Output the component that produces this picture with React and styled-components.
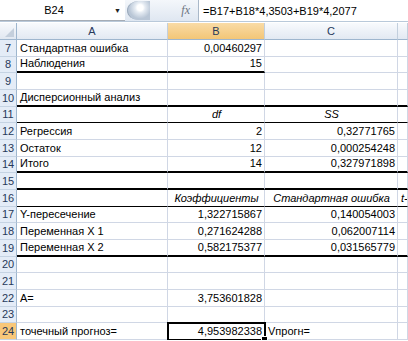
import styled, { createGlobalStyle } from "styled-components";

const GlobalStyle = createGlobalStyle`
  html, body {
    margin: 0;
    padding: 0;
    background: #ffffff;
  }
  body {
    font-family: "Liberation Sans", Arial, sans-serif;
    font-size: 11px;
    color: #000;
    overflow: hidden;
  }
`;

const columns = ["A", "B", "C", ""];

// rows of the regression output: [number, A, B, C, D, options]
const rows = [
  { n: 7, cells: ["Стандартная ошибка", "0,00460297", "", ""] },
  { n: 8, cells: ["Наблюдения", "15", "", ""], bottom: ["thick", "thick", null, null] },
  { n: 9, cells: ["", "", "", ""] },
  { n: 10, cells: ["Дисперсионный анализ", "", "", ""], bottom: ["thick", "thick", "thick", "thick"] },
  { n: 11, cells: ["", "df", "SS", ""], header: true, bottom: ["thin", "thin", "thin", "thin"] },
  { n: 12, cells: ["Регрессия", "2", "0,32771765", ""] },
  { n: 13, cells: ["Остаток", "12", "0,000254248", ""] },
  { n: 14, cells: ["Итого", "14", "0,327971898", ""], bottom: ["thick", "thick", "thick", "thick"] },
  { n: 15, cells: ["", "", "", ""], bottom: ["thick", "thick", "thick", "thick"] },
  { n: 16, cells: ["", "Коэффициенты", "Стандартная ошибка", "t-"], header: true, bottom: ["thin", "thin", "thin", "thin"] },
  { n: 17, cells: ["Y-пересечение", "1,322715867", "0,140054003", ""] },
  { n: 18, cells: ["Переменная X 1", "0,271624288", "0,062007114", ""] },
  { n: 19, cells: ["Переменная X 2", "0,582175377", "0,031565779", ""], bottom: ["thick", "thick", "thick", "thick"] },
  { n: 20, cells: ["", "", "", ""] },
  { n: 21, cells: ["", "", "", ""] },
  { n: 22, cells: ["A=", "3,753601828", "", ""] },
  { n: 23, cells: ["", "", "", ""] },
  { n: 24, cells: ["точечный прогноз=", "4,953982338", "Vпрогн=", ""], selected: 1, active: true },
];

const isNumber = (v) => /^[0-9,]+$/.test(v);

const App = () => {
  return (
    <>
      <GlobalStyle />
      <FormulaBar>
        <NameBox>
          <NameText>B24</NameText>
          <Arrow>▼</Arrow>
        </NameBox>
        <Buttons>
          <Knob />
          <Fx>fx</Fx>
        </Buttons>
        <Formula>=B17+B18*4,3503+B19*4,2077</Formula>
      </FormulaBar>
      <Sheet>
        <Corner />
        {columns.map((c, i) => (
          <ColHeader key={"h" + i} $active={c === "B"}>
            {c}
          </ColHeader>
        ))}
        {rows.map((row) => (
          <Row key={row.n} row={row} />
        ))}
      </Sheet>
    </>
  );
};

const Row = ({ row }) => (
  <>
    <RowHeader $active={row.active}>{row.n}</RowHeader>
    {row.cells.map((v, i) => {
      let align = "left";
      if (row.header) align = i === 3 ? "left" : "center";
      else if (isNumber(v)) align = "right";
      return (
        <Cell
          key={i}
          $align={align}
          $italic={row.header}
          $bottom={row.bottom ? row.bottom[i] : null}
          $selected={row.selected === i}
        >
          {v}
        </Cell>
      );
    })}
  </>
);

const FormulaBar = styled.div`
  display: flex;
  height: 21px;
  border-bottom: 1px solid #b9c9da;
  background: #ffffff;
  margin-bottom: 1px;
`;

const NameBox = styled.div`
  width: 125px;
  display: flex;
  align-items: center;
  position: relative;
  border-bottom: 1px solid #a5acb5;
  box-sizing: border-box;
`;

const NameText = styled.span`
  width: 108px;
  text-align: center;
  font-size: 11px;
  color: #000;
`;

const Arrow = styled.span`
  font-size: 7px;
  color: #222;
  margin-left: 6px;
`;

const Buttons = styled.div`
  width: 74px;
  display: flex;
  align-items: center;
  background: linear-gradient(#f4f7fb, #dfe7f1);
  border-right: 1px solid #a9b8c9;
  box-sizing: border-box;
  position: relative;
`;

const Knob = styled.div`
  width: 22px;
  height: 19px;
  margin-left: 2px;
  border-radius: 50% 0 0 50%;
  background: radial-gradient(circle at 55% 35%, #ffffff 0 3px, #e6ecf3 5px, #b9c6d6 11px);
  border-left: 1px solid #9aa9bb;
`;

const Fx = styled.span`
  margin-left: auto;
  margin-right: 8px;
  font-family: "Liberation Serif", "Times New Roman", serif;
  font-style: italic;
  font-size: 12px;
  color: #6b7480;
`;

const Formula = styled.div`
  flex: 1;
  display: flex;
  align-items: center;
  padding-left: 4px;
  font-size: 11px;
  white-space: nowrap;
  overflow: hidden;
`;

const Sheet = styled.div`
  display: grid;
  grid-template-columns: 17px 151px 97px 133px 1fr;
  grid-template-rows: 17px repeat(18, 16.67px);
`;

const Corner = styled.div`
  background: linear-gradient(#f7f9fc, #e1e8f1);
  border-right: 1px solid #9eb6ce;
  border-bottom: 1px solid #9eb6ce;
  box-sizing: border-box;
  position: relative;
  &::after {
    content: "";
    position: absolute;
    right: 2px;
    bottom: 2px;
    border-left: 9px solid transparent;
    border-bottom: 9px solid #c4cfdc;
  }
`;

const ColHeader = styled.div`
  display: flex;
  align-items: center;
  justify-content: center;
  box-sizing: border-box;
  border-right: 1px solid #c2cfdd;
  border-bottom: 1px solid #9eb6ce;
  background: ${(p) =>
    p.$active
      ? "linear-gradient(#f9dba6, #f3c677)"
      : "linear-gradient(#f8fafd, #e2e9f2)"};
  color: #27395a;
  font-size: 11px;
`;

const RowHeader = styled.div`
  display: flex;
  align-items: flex-end;
  justify-content: center;
  padding-bottom: 1px;
  box-sizing: border-box;
  border-right: 1px solid #9eb6ce;
  border-bottom: 1px solid #c5d3e3;
  background: ${(p) => (p.$active ? "#f8c779" : "#e4ecf7")};
  color: #27395a;
  font-size: 11px;
  line-height: 13px;
`;

const Cell = styled.div`
  display: flex;
  align-items: flex-end;
  justify-content: ${(p) =>
    p.$align === "right" ? "flex-end" : p.$align === "center" ? "center" : "flex-start"};
  padding: 0 2px 1px 3px;
  box-sizing: border-box;
  border-right: 1px solid #d0d7e5;
  border-bottom: ${(p) =>
    p.$bottom === "thick"
      ? "2px solid #000"
      : p.$bottom === "thin"
      ? "1px solid #000"
      : "1px solid #d0d7e5"};
  font-style: ${(p) => (p.$italic ? "italic" : "normal")};
  white-space: nowrap;
  overflow: ${(p) => (p.$selected ? "visible" : "hidden")};
  line-height: 13px;
  position: relative;
  ${(p) =>
    p.$selected &&
    `
    outline: 2px solid #000;
    outline-offset: -1px;
    z-index: 1;
    &::after {
      content: "";
      position: absolute;
      right: -4px;
      bottom: -4px;
      width: 5px;
      height: 5px;
      background: #000;
      border: 1px solid #fff;
    }
  `}
`;

export default App;
